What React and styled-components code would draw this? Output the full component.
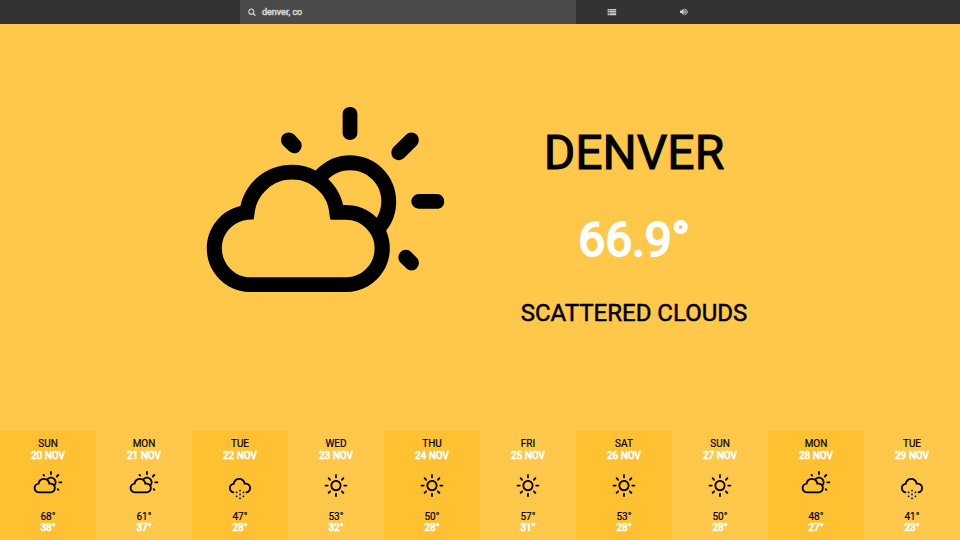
import React from 'react';
import styled, { createGlobalStyle } from 'styled-components';
import { WiDayCloudy, WiDaySunny, WiSnow } from 'react-icons/wi';

const GlobalStyle = createGlobalStyle`
  * { box-sizing: border-box; }
  body { margin: 0; font-family: Roboto, sans-serif; background: #ffc84a; color: #000; }
`;

const Page = styled.div`
  height: 540px;
  width: 960px;
  display: flex;
  flex-direction: column;
  overflow: hidden;
`;

const TopBar = styled.header`
  height: 24px;
  flex: none;
  background: #333;
  display: grid;
  grid-template-columns: 240px 336px 72px 72px;
`;

const Search = styled.label`
  grid-column: 2;
  background: #4a4a4a;
  color: #d0d0d0;
  display: flex;
  align-items: center;
  padding-left: 8px;
  gap: 6px;
  font-size: 9px;
  font-weight: 400;
  -webkit-text-stroke: 0.6px currentColor;
`;

const BarButton = styled.button`
  border: 0;
  padding: 0;
  background: none;
  color: #d0d0d0;
  display: flex;
  align-items: center;
  justify-content: center;
`;

const Glyph = styled.svg`
  display: block;
  fill: currentColor;
`;

const Main = styled.main`
  flex: 1;
  display: flex;
`;

const IconPane = styled.div`
  width: 326px;
  margin-left: 163px;
  padding: 75px 0.8px 0 0;
  display: flex;
  justify-content: center;
  align-items: flex-start;
`;

const Summary = styled.section`
  width: 290px;
  text-align: center;
  text-transform: uppercase;
`;

const City = styled.h1`
  margin: 101px 0 0;
  font-size: 48px;
  line-height: 56px;
  font-weight: 400;
  -webkit-text-stroke: 1px currentColor;
`;

const Temperature = styled.div`
  margin-top: 31px;
  font-size: 48px;
  line-height: 56px;
  font-weight: 400;
  -webkit-text-stroke: 2.1px currentColor;
  color: #fff;
`;

const Condition = styled.div`
  margin-top: 31px;
  font-size: 24px;
  line-height: 28px;
  font-weight: 400;
  -webkit-text-stroke: 0.5px currentColor;
`;

const Forecast = styled.section`
  height: 109px;
  flex: none;
  display: grid;
  grid-template-columns: repeat(10, 96px);
`;

const Day = styled.article`
  display: flex;
  flex-direction: column;
  align-items: center;
  padding-top: 7px;
  font-size: 10px;
  line-height: 12px;
  font-weight: 400;
  -webkit-text-stroke: 0.2px currentColor;
  background: ${(p) => (p.$shaded ? '#ffc031' : 'transparent')};
`;

const Light = styled.div`
  color: #fff;
  -webkit-text-stroke: 0.7px currentColor;
`;

const DayIcon = styled.div`
  height: 34px;
  margin: 8px 0 7px;
  svg { display: block; }
`;

const Temps = styled.div`
  line-height: 11px;
  text-align: center;
`;

const icons = { cloudy: WiDayCloudy, sunny: WiDaySunny, snow: WiSnow };

const days = [
  ['Sun', 20, 'cloudy', 68, 38],
  ['Mon', 21, 'cloudy', 61, 37],
  ['Tue', 22, 'snow', 47, 28],
  ['Wed', 23, 'sunny', 53, 32],
  ['Thu', 24, 'sunny', 50, 28],
  ['Fri', 25, 'sunny', 57, 31],
  ['Sat', 26, 'sunny', 53, 28],
  ['Sun', 27, 'sunny', 50, 28],
  ['Mon', 28, 'cloudy', 48, 27],
  ['Tue', 29, 'snow', 41, 23],
];

const SearchGlyph = () => (
  <Glyph width="8" height="8" viewBox="0 0 8 8">
    <circle cx="3.3" cy="3.7" r="2.5" fill="none" stroke="currentColor" strokeWidth="1.2" />
    <path d="M5.2 5.6 7 7.3" stroke="currentColor" strokeWidth="1.4" strokeLinecap="round" />
  </Glyph>
);

const ListGlyph = () => (
  <Glyph width="10" height="8" viewBox="0 0 10 8">
    <path d="M.6 1h1.4v1.2H.6zM.6 2.7h1.4v1.2H.6zM.6 4.4h1.4v1.2H.6zM.6 6.1h1.4v1.2H.6zM2.3 1H9.2v1.3H2.3zM2.3 2.7H9.2v1.3H2.3zM2.3 4.4H9.2v1.3H2.3zM2.3 6.1H9.2v1.2H2.3z" />
  </Glyph>
);

const SoundGlyph = () => (
  <Glyph width="8" height="8" viewBox="0 0 1664 1536">
    <path d="M768 192v1088q0 26-19 45t-45 19-45-19l-333-333H64q-26 0-45-19t-19-45V544q0-26 19-45t45-19h262l333-333q19-19 45-19t45 19 19 45z" />
    <path
      d="M890 560q120 60 120 176T890 912M980 350q230 130 230 386t-230 386M1080 150q460 210 460 586t-460 586"
      fill="none" stroke="currentColor" strokeWidth="190" strokeLinecap="round"
    />
  </Glyph>
);

export default function App() {
  return (
    <Page>
      <GlobalStyle />
      <TopBar>
        <Search><SearchGlyph /><span>denver, co</span></Search>
        <BarButton aria-label="List"><ListGlyph /></BarButton>
        <BarButton aria-label="Sound"><SoundGlyph /></BarButton>
      </TopBar>
      <Main>
        <IconPane><WiDayCloudy size={265} /></IconPane>
        <Summary>
          <City>Denver</City>
          <Temperature>66.9°</Temperature>
          <Condition>scattered clouds</Condition>
        </Summary>
      </Main>
      <Forecast>
        {days.map(([name, date, kind, high, low], i) => {
          const Icon = icons[kind];
          return (
            <Day key={date} $shaded={i % 2 === 0}>
              <div>{name.toUpperCase()}</div>
              <Light>{date} NOV</Light>
              <DayIcon><Icon size={32} /></DayIcon>
              <Temps>
                <div>{high}°</div>
                <Light>{low}°</Light>
              </Temps>
            </Day>
          );
        })}
      </Forecast>
    </Page>
  );
}
